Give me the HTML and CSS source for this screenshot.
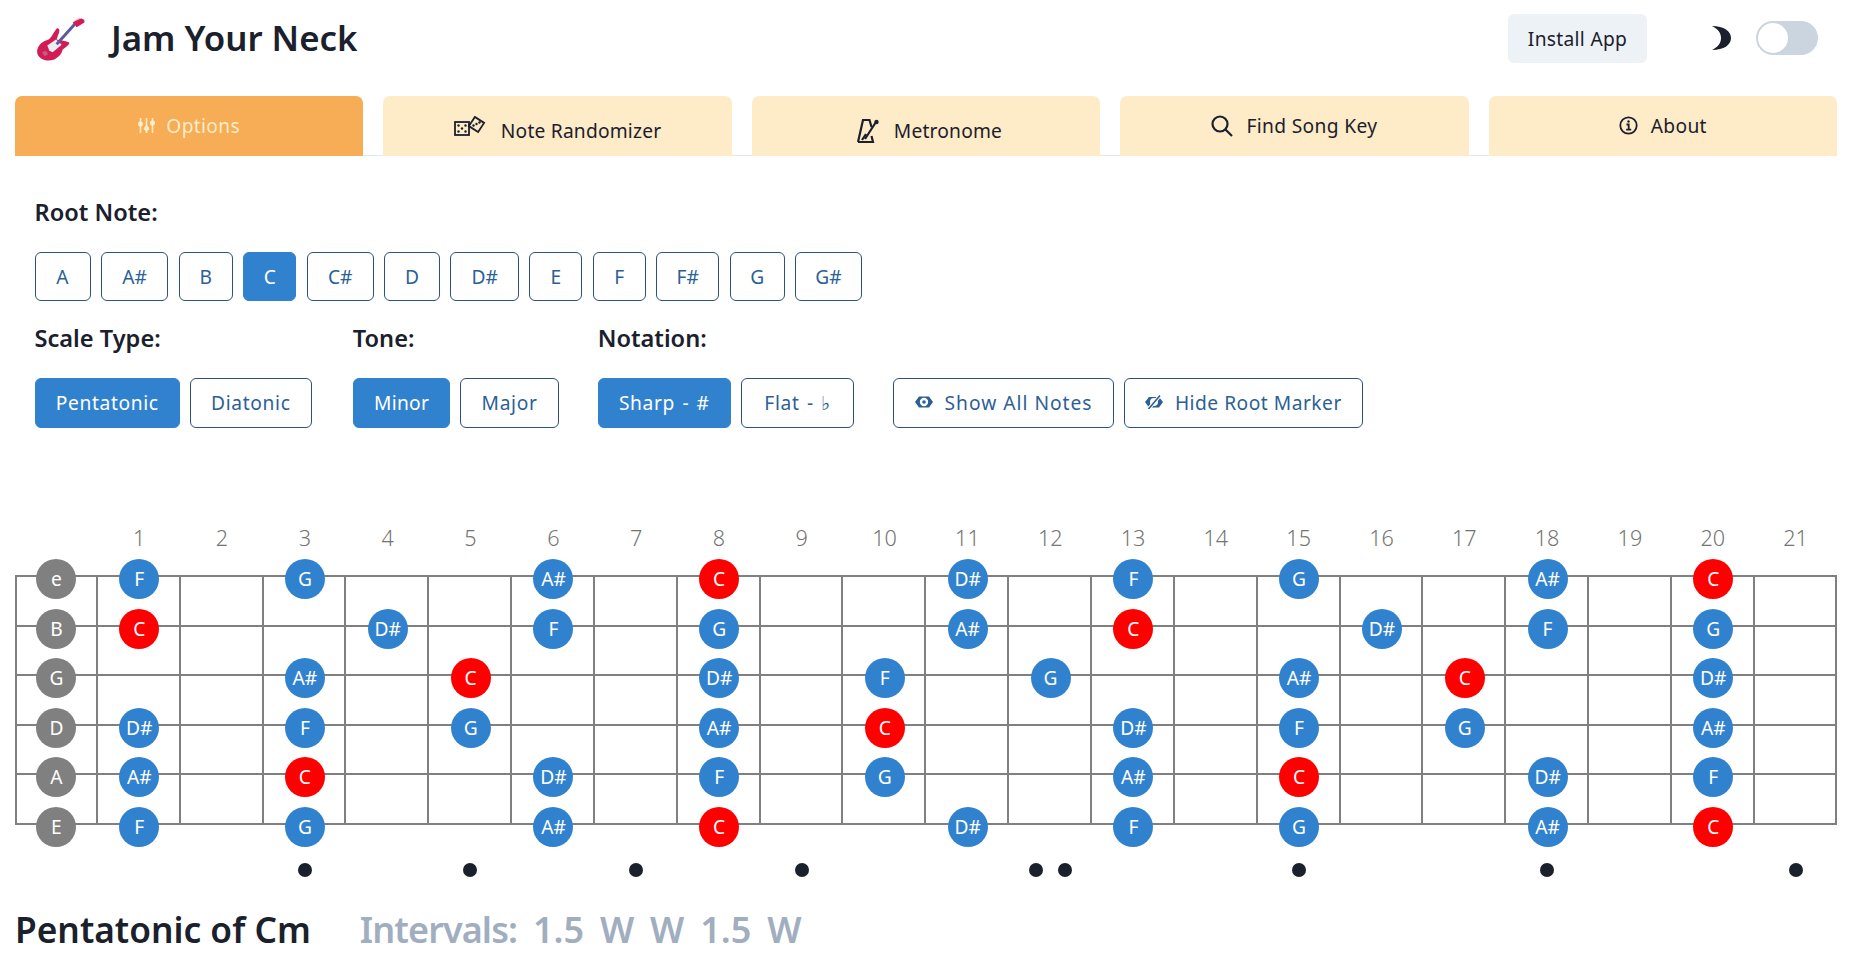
FILE: index.html
```html
<!DOCTYPE html>
<html lang="en">
<head>
  <meta charset="UTF-8">
  <meta name="viewport" content="width=device-width, initial-scale=1.0">
  <title>Jam Your Neck</title>
  <link rel="stylesheet" href="styles.css">
</head>
<body>
  <header class="header">
    <svg class="logo" viewBox="50 25 150 140" aria-hidden="true">
      <path fill="#f3b9c9" d="M165 42l16-10 3 4-16 10zM172 52l20-12 2 4-18 11z"/>
      <path fill="#d31c55" d="M112 65c10-3 10 10 4 20l-4 13c13 4 28 4 38 9 0 8-12 15-20 21-2 12-10 22-25 30-20 7-45 2-51-18-4-18 11-35 28-40 13-2 18-20 30-35z"/>
      <path fill="#e9eef0" d="M84 116l26-18 17 16-27 22-10-4z"/>
      <path fill="#b9637f" d="M68 136l12-4 6 10-10 6z"/>
      <path stroke="#5d5a9c" stroke-width="9" d="M112 112l56-62"/>
      <path fill="#d31c55" d="M160 46l25-11c10 1 13 9 9 13l-22 13z"/>
    </svg>
    <h1 class="title">Jam Your Neck</h1>
    <button class="install" type="button">Install App</button>
    <svg class="moon" viewBox="0 0 19 24" aria-hidden="true">
      <path d="M0 0c12 0 19 5 19 12s-7 12-19 12c6-3 9-7 9-12S6 3 0 0z"/>
    </svg>
    <div class="switch"><span class="thumb"></span></div>
  </header>

  <nav class="tabs">
    <a class="tab active">
      <svg class="icon" width="17" height="17" viewBox="0 0 17 17" aria-hidden="true">
        <path d="M2.5 1v15M8.5 1v15M14.5 1v15" stroke-width="1.6"/>
        <circle cx="2.5" cy="7" r="2.2"/><circle cx="8.5" cy="11.5" r="2.2"/><circle cx="14.5" cy="6" r="2.2"/>
      </svg>
      Options
    </a>
    <a class="tab low">
      <svg class="icon dice" width="32" height="20" viewBox="0 0 32 20" aria-hidden="true">
        <rect class="line" x="1" y="6" width="14" height="13"/>
        <rect class="line" x="17" y="3" width="11" height="11" transform="rotate(33 22.5 8.5)"/>
        <g class="pips">
          <circle cx="4.5" cy="9.5" r="1.2"/><circle cx="11.5" cy="9.5" r="1.2"/><circle cx="8" cy="12.5" r="1.2"/>
          <circle cx="4.5" cy="15.5" r="1.2"/><circle cx="11.5" cy="15.5" r="1.2"/>
          <circle cx="19.5" cy="9.5" r="1.2"/><circle cx="22.5" cy="8" r="1.2"/><circle cx="25.5" cy="6.5" r="1.2"/>
        </g>
      </svg>
      Note Randomizer
    </a>
    <a class="tab low metro">
      <svg class="icon" width="22" height="24" viewBox="0 0 22 24" aria-hidden="true">
        <path class="line heavy" d="M1 23L6 1h6.5l2 7M1 23h15l-1.500-6M5 21l4-6"/>
        <path class="line heavy" d="M8 20L19 3"/>
        <circle class="pips" cx="19.500" cy="3" r="2.200"/>
      </svg>
      Metronome
    </a>
    <a class="tab">
      <svg class="icon" width="22" height="22" viewBox="0 0 22 22" aria-hidden="true">
        <circle class="line wide" cx="9" cy="9" r="7.500"/>
        <path class="line wide" d="M14.500 14.500L21 21"/>
      </svg>
      Find Song Key
    </a>
    <a class="tab">
      <svg class="icon" width="19" height="19" viewBox="0 0 19 19" aria-hidden="true">
        <circle class="line" cx="9.500" cy="9.500" r="8.200"/>
        <path class="line" d="M7.500 8.500h2.200v5M7.200 13.700h5"/>
        <circle class="pips" cx="9.500" cy="5.500" r="1.200"/>
      </svg>
      About
    </a>
  </nav>

  <section class="options">
    <h2 class="label">Root Note:</h2>
    <div class="root-row">
      <button class="btn" type="button">A</button>
      <button class="btn" type="button">A#</button>
      <button class="btn" type="button">B</button>
      <button class="btn on" type="button">C</button>
      <button class="btn" type="button">C#</button>
      <button class="btn" type="button">D</button>
      <button class="btn" type="button">D#</button>
      <button class="btn" type="button">E</button>
      <button class="btn" type="button">F</button>
      <button class="btn" type="button">F#</button>
      <button class="btn" type="button">G</button>
      <button class="btn" type="button">G#</button>
    </div>
    <div class="groups">
      <div class="group">
        <h2 class="label">Scale Type:</h2>
        <div class="btn-row">
          <button class="btn wide on" type="button">Pentatonic</button>
          <button class="btn wide" type="button">Diatonic</button>
        </div>
      </div>
      <div class="group">
        <h2 class="label">Tone:</h2>
        <div class="btn-row">
          <button class="btn wide minor on" type="button">Minor</button>
          <button class="btn wide" type="button">Major</button>
        </div>
      </div>
      <div class="group">
        <h2 class="label">Notation:</h2>
        <div class="btn-row">
          <button class="btn wide notation on" type="button">Sharp - #</button>
          <button class="btn wide notation flat" type="button">Flat - ♭</button>
        </div>
      </div>
      <div class="btn-row">
        <button class="btn wide show" type="button">
          <svg class="eye" viewBox="0 0 18 14" aria-hidden="true">
            <path fill-rule="evenodd" d="M0 7l4-5.500h10L18 7l-4 5.500H4zM9 2.800a4.200 4.200 0 100 8.400 4.200 4.200 0 000-8.400zM9 5.200a1.800 1.800 0 110 3.600 1.800 1.800 0 010-3.600z"/>
          </svg>
          Show All Notes
        </button>
        <button class="btn wide hide" type="button">
          <svg class="eye" viewBox="0 0 18 14" aria-hidden="true">
            <path fill-rule="evenodd" d="M0 7l4-5h10l4 5-4 5.500H4zM9 3a4 4 0 100 8 4 4 0 000-8z"/>
            <path class="slash" d="M3.500 14L15 .5"/>
            <path class="slash thin" d="M3.500 14L15 .5"/>
          </svg>
          Hide Root Marker
        </button>
      </div>
    </div>
  </section>

  <section class="fretboard">
    <div class="frets numbers">
      <span></span><span>1</span><span>2</span><span>3</span><span>4</span><span>5</span><span>6</span><span>7</span><span>8</span><span>9</span><span>10</span><span>11</span><span>12</span><span>13</span><span>14</span><span>15</span><span>16</span><span>17</span><span>18</span><span>19</span><span>20</span><span>21</span>
    </div>

    <div class="frets strings">
      <!-- e -->
      <div class="fret"><span class="note open">e</span></div>
      <div class="fret"><span class="note">F</span></div>
      <div class="fret"></div>
      <div class="fret"><span class="note">G</span></div>
      <div class="fret"></div>
      <div class="fret"></div>
      <div class="fret"><span class="note">A#</span></div>
      <div class="fret"></div>
      <div class="fret"><span class="note root">C</span></div>
      <div class="fret"></div>
      <div class="fret"></div>
      <div class="fret"><span class="note">D#</span></div>
      <div class="fret"></div>
      <div class="fret"><span class="note">F</span></div>
      <div class="fret"></div>
      <div class="fret"><span class="note">G</span></div>
      <div class="fret"></div>
      <div class="fret"></div>
      <div class="fret"><span class="note">A#</span></div>
      <div class="fret"></div>
      <div class="fret"><span class="note root">C</span></div>
      <div class="fret"></div>
      <!-- B -->
      <div class="fret"><span class="note open">B</span></div>
      <div class="fret"><span class="note root">C</span></div>
      <div class="fret"></div>
      <div class="fret"></div>
      <div class="fret"><span class="note">D#</span></div>
      <div class="fret"></div>
      <div class="fret"><span class="note">F</span></div>
      <div class="fret"></div>
      <div class="fret"><span class="note">G</span></div>
      <div class="fret"></div>
      <div class="fret"></div>
      <div class="fret"><span class="note">A#</span></div>
      <div class="fret"></div>
      <div class="fret"><span class="note root">C</span></div>
      <div class="fret"></div>
      <div class="fret"></div>
      <div class="fret"><span class="note">D#</span></div>
      <div class="fret"></div>
      <div class="fret"><span class="note">F</span></div>
      <div class="fret"></div>
      <div class="fret"><span class="note">G</span></div>
      <div class="fret"></div>
      <!-- G -->
      <div class="fret"><span class="note open">G</span></div>
      <div class="fret"></div>
      <div class="fret"></div>
      <div class="fret"><span class="note">A#</span></div>
      <div class="fret"></div>
      <div class="fret"><span class="note root">C</span></div>
      <div class="fret"></div>
      <div class="fret"></div>
      <div class="fret"><span class="note">D#</span></div>
      <div class="fret"></div>
      <div class="fret"><span class="note">F</span></div>
      <div class="fret"></div>
      <div class="fret"><span class="note">G</span></div>
      <div class="fret"></div>
      <div class="fret"></div>
      <div class="fret"><span class="note">A#</span></div>
      <div class="fret"></div>
      <div class="fret"><span class="note root">C</span></div>
      <div class="fret"></div>
      <div class="fret"></div>
      <div class="fret"><span class="note">D#</span></div>
      <div class="fret"></div>
      <!-- D -->
      <div class="fret"><span class="note open">D</span></div>
      <div class="fret"><span class="note">D#</span></div>
      <div class="fret"></div>
      <div class="fret"><span class="note">F</span></div>
      <div class="fret"></div>
      <div class="fret"><span class="note">G</span></div>
      <div class="fret"></div>
      <div class="fret"></div>
      <div class="fret"><span class="note">A#</span></div>
      <div class="fret"></div>
      <div class="fret"><span class="note root">C</span></div>
      <div class="fret"></div>
      <div class="fret"></div>
      <div class="fret"><span class="note">D#</span></div>
      <div class="fret"></div>
      <div class="fret"><span class="note">F</span></div>
      <div class="fret"></div>
      <div class="fret"><span class="note">G</span></div>
      <div class="fret"></div>
      <div class="fret"></div>
      <div class="fret"><span class="note">A#</span></div>
      <div class="fret"></div>
      <!-- A -->
      <div class="fret"><span class="note open">A</span></div>
      <div class="fret"><span class="note">A#</span></div>
      <div class="fret"></div>
      <div class="fret"><span class="note root">C</span></div>
      <div class="fret"></div>
      <div class="fret"></div>
      <div class="fret"><span class="note">D#</span></div>
      <div class="fret"></div>
      <div class="fret"><span class="note">F</span></div>
      <div class="fret"></div>
      <div class="fret"><span class="note">G</span></div>
      <div class="fret"></div>
      <div class="fret"></div>
      <div class="fret"><span class="note">A#</span></div>
      <div class="fret"></div>
      <div class="fret"><span class="note root">C</span></div>
      <div class="fret"></div>
      <div class="fret"></div>
      <div class="fret"><span class="note">D#</span></div>
      <div class="fret"></div>
      <div class="fret"><span class="note">F</span></div>
      <div class="fret"></div>
      <!-- E -->
      <div class="fret"><span class="note open">E</span></div>
      <div class="fret"><span class="note">F</span></div>
      <div class="fret"></div>
      <div class="fret"><span class="note">G</span></div>
      <div class="fret"></div>
      <div class="fret"></div>
      <div class="fret"><span class="note">A#</span></div>
      <div class="fret"></div>
      <div class="fret"><span class="note root">C</span></div>
      <div class="fret"></div>
      <div class="fret"></div>
      <div class="fret"><span class="note">D#</span></div>
      <div class="fret"></div>
      <div class="fret"><span class="note">F</span></div>
      <div class="fret"></div>
      <div class="fret"><span class="note">G</span></div>
      <div class="fret"></div>
      <div class="fret"></div>
      <div class="fret"><span class="note">A#</span></div>
      <div class="fret"></div>
      <div class="fret"><span class="note root">C</span></div>
      <div class="fret"></div>
    </div>

    <div class="frets inlays">
      <span></span><span></span><span></span><span><i></i></span><span></span><span><i></i></span><span></span><span><i></i></span><span></span><span><i></i></span><span></span><span></span><span><i></i><i></i></span><span></span><span></span><span><i></i></span><span></span><span></span><span><i></i></span><span></span><span></span><span><i></i></span>
    </div>
  </section>

  <div class="summary">
    <h2 class="scale-name">Pentatonic of Cm</h2>
    <p class="intervals"><span class="intervals-label">Intervals:</span> 1.5 W W 1.5 W</p>
  </div>
</body>
</html>
```

FILE: styles.css
```css
* {
  box-sizing: border-box;
}

body {
  margin: 0;
  padding: 0 22px 0 15px;
  font-family: "Noto Sans", "DejaVu Sans", sans-serif;
  font-size: 19.2px;
  color: #1a202c;
  background-color: #fff;
}

h1, h2, p {
  margin: 0;
}

/* Header */
.header {
  display: flex;
  align-items: center;
  height: 76px;
  margin-bottom: 20px;
  padding: 0 19px 0 21px;
}

.logo {
  width: 50px;
  height: 47px;
}

.title {
  margin-left: 25px;
  font-size: 34.8px;
  font-weight: 600;
  line-height: 44px;
}

.install {
  width: 139px;
  height: 49px;
  margin-left: auto;
  padding-bottom: 1px;
  border: none;
  border-radius: 6px;
  background-color: #edf2f7;
  color: #1a202c;
  font: inherit;
  letter-spacing: 0.3px;
}

.moon {
  width: 19px;
  height: 24px;
  margin-left: 65px;
  fill: #1a202c;
}

.switch {
  width: 62px;
  height: 34px;
  margin-left: 25px;
  padding: 2px;
  border-radius: 17px;
  background-color: #cbd5e0;
}

.thumb {
  display: block;
  width: 30px;
  height: 30px;
  border-radius: 50%;
  background-color: #fff;
}

/* Tabs */
.tabs {
  display: grid;
  grid-template-columns: repeat(5, 1fr);
  column-gap: 20px;
  height: 60px;
  border-bottom: 1px solid #e2e8f0;
}

.tab {
  display: flex;
  align-items: center;
  justify-content: center;
  gap: 13px;
  height: 60px;
  padding-bottom: 1px;
  border-radius: 7px 7px 0 0;
  background-color: #feebc8;
  color: #1a202c;
  letter-spacing: 0.35px;
}

.tab.low {
  padding-top: 10px;
  gap: 15px;
  letter-spacing: 0.2px;
}

.tab.metro {
  padding-left: 7px;
}

.tab.active {
  gap: 11px;
  background-color: #f6ad55;
  color: #feebc8;
}

.icon {
  fill: #1a202c;
  stroke: none;
}

.icon.dice {
  margin-top: -9px;
}

.icon .line {
  fill: none;
  stroke: #1a202c;
  stroke-width: 1.8;
}

.icon .heavy {
  stroke-width: 2.2;
}

.icon .wide {
  stroke-width: 2.2;
}

.tab.active .icon {
  fill: #feebc8;
  stroke: #feebc8;
}

/* Options */
.options {
  padding: 43px 20px 0 19.5px;
}

.label {
  margin-bottom: 27px;
  font-size: 23.6px;
  font-weight: 600;
  line-height: 26px;
}

.btn-row {
  display: flex;
  gap: 10px;
}

.root-row {
  display: grid;
  grid-template-columns: 56px 67.5px 54.7px 53px 67px 56px 69px 53px 53px 63.5px 55px 67px;
  column-gap: 10.25px;
  margin-bottom: 24px;
}

.root-row .btn {
  padding: 0 0 1px;
}

.groups {
  display: flex;
  align-items: flex-end;
}

.group {
  margin-right: 39px;
}

.group:first-child {
  margin-right: 41px;
}

.btn {
  display: flex;
  align-items: center;
  justify-content: center;
  height: 49px;
  padding: 0 20.2px 1px;
  border: 1px solid #2c5282;
  border-radius: 6px;
  background-color: #fff;
  color: #2c5f96;
  font: inherit;
}

.btn.wide {
  height: 50px;
  padding-bottom: 2px;
  letter-spacing: 0.65px;
}

.btn.minor {
  letter-spacing: 0.3px;
}

.btn.notation {
  word-spacing: 1.75px;
}

.btn.flat {
  width: 113.5px;
}

.btn.show {
  letter-spacing: 1px;
}

.btn.hide {
  letter-spacing: 0.5px;
}

.btn.on {
  border-color: #3182ce;
  background-color: #3182ce;
  color: #fff;
}

.eye {
  width: 18px;
  height: 14px;
  margin-right: 12px;
  fill: #2c5f96;
}

.eye .slash {
  fill: none;
  stroke: #fff;
  stroke-width: 3.5;
}

.eye .thin {
  stroke: #2c5f96;
  stroke-width: 1.6;
}

/* Fretboard */
.fretboard {
  margin-top: 95px;
}

.frets {
  display: grid;
  grid-template-columns: repeat(22, 1fr);
}

.numbers {
  margin-bottom: 23px;
  color: #747474;
  font-size: 21.6px;
  font-weight: 300;
  line-height: 29px;
  text-align: center;
}

.strings {
  grid-template-columns: repeat(21, 82.85px) 1fr;
  grid-template-rows: repeat(5, 49.6px) 2px;
}

.fret {
  border-top: 2px solid #808080;
  border-right: 2px solid #808080;
}

.fret:nth-child(22n+1) {
  border-left: 2px solid #808080;
}

.note {
  display: flex;
  align-items: center;
  justify-content: center;
  width: 40px;
  height: 40px;
  margin: -18px 0 0 21.4px;
  padding-bottom: 1px;
  border-radius: 50%;
  background-color: #3182ce;
  color: #fff;
}

.note.root {
  background-color: #ff0000;
}

.note.open {
  margin-left: 19.4px;
  background-color: #808080;
}

.inlays {
  height: 14px;
  margin-top: 38px;
}

.inlays span {
  display: flex;
  justify-content: center;
  gap: 15px;
}

.inlays i {
  width: 14px;
  height: 14px;
  border-radius: 50%;
  background-color: #1a202c;
}

/* Summary */
.summary {
  display: flex;
  gap: 49px;
  margin-top: 31px;
  font-size: 36px;
  line-height: 43px;
}

.scale-name {
  font-size: 35.3px;
  font-weight: 600;
}

.intervals {
  color: #a0aec0;
  font-weight: 600;
  word-spacing: 6.5px;
}

.intervals-label {
  letter-spacing: -0.9px;
}
```
